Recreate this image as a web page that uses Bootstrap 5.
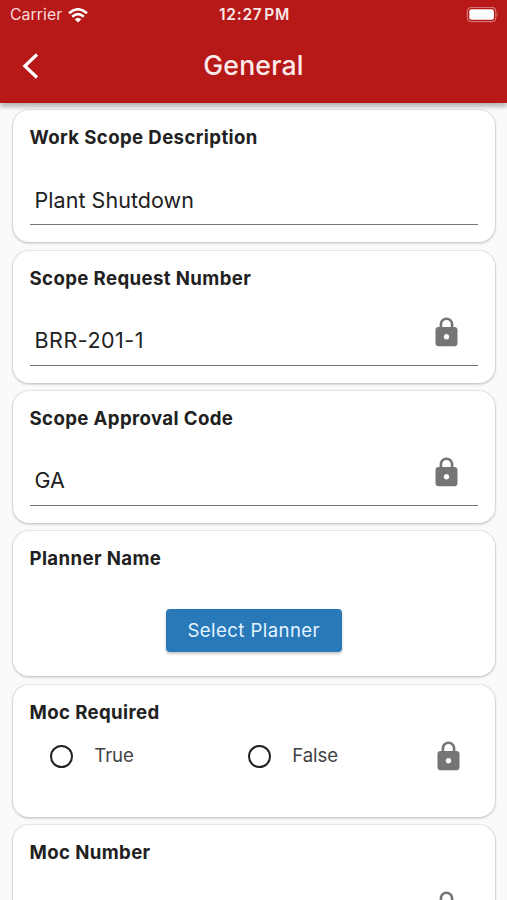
<!DOCTYPE html>
<html lang="en">
<head>
<meta charset="utf-8">
<meta name="viewport" content="width=device-width, initial-scale=1">
<title>General</title>
<link href="https://cdn.jsdelivr.net/npm/bootstrap@5.3.0/dist/css/bootstrap.min.css" rel="stylesheet">
<style>
  body { font-family: Inter, "Liberation Sans", sans-serif; background: #fafafa; color: #212121; height: 900px; }
  .app-header { background: #b71818; height: 103.4px; flex: none; box-shadow: 0 4px 4px rgba(0,0,0,.2), 0 2px 7px rgba(0,0,0,.1); z-index: 2; }
  .status-bar { height: 30px; padding: 0 8px 0 10px; color: #f8dcdc; font-size: 15.8px; line-height: 30px; }
  .carrier { letter-spacing: .08px; }
  .wifi { margin-left: 6px; }
  .clock { font-weight: 600; font-size: 15.5px; letter-spacing: .75px; word-spacing: -3px; color: #fbe6e6; }
  .title-bar { height: 73px; padding: 0 22px; }
  .screen-title { font-size: 26.6px; line-height: 70px; padding-bottom: 3px; letter-spacing: .2px; font-weight: 450; color: #fdeaea; }
  .side { flex: 1 1 0; }
  .form-list { padding: 7px 12px 0 13px; gap: 8.2px; min-height: 0; }
  .field-card { height: 132px; flex: none; border: 0; border-radius: 16px; background: #fff; padding: 14px 17px 0 16.5px;
    box-shadow: 0 0 0 1px rgba(0,0,0,.05), 0 1px 2px 1px rgba(0,0,0,.13); }
  .planner-card { height: 145.4px; }
  .field-label { font-size: 18.6px; font-weight: 650; line-height: 26px; letter-spacing: .39px; margin: 0; }
  .field-line { height: 75px; border-bottom: 1.5px solid #757575; padding: 0 15.5px 0 5px; }
  .field-value { font-size: 21.5px; line-height: 30px; letter-spacing: .05px; padding-top: 34.3px; }
  .code-value { letter-spacing: .5px; }
  .field-lock { padding-top: 25.5px; line-height: 0; }
  .btn-planner, .btn-planner:hover { background: #2979b9; color: #e4f3ff; width: 176px; height: 43px; border: 0; border-radius: 4px; padding: 0; margin-top: 38.5px;
    font-size: 18.6px; line-height: 43px; letter-spacing: .42px; box-shadow: 0 2px 3px rgba(0,0,0,.22); }
  .choice-row { height: 63px; padding: 0 13px 0 20.5px; }
  .choice { width: 198px; gap: 21.3px; font-size: 18.6px; letter-spacing: -.1px; color: #424242; }
  .choice:nth-child(2) { width: 100px; }
  .ring { width: 23px; height: 23px; border: 2.2px solid #212121; border-radius: 50%; }
</style>
</head>
<body class="overflow-hidden d-flex flex-column">
<svg class="d-none">
  <symbol id="lock" viewBox="0 0 24 24"><path fill="#757575" d="M18 8h-1V6c0-2.760-2.240-5-5-5S7 3.240 7 6v2H6c-1.100 0-2 .9-2 2v10c0 1.100.9 2 2 2h12c1.100 0 2-.9 2-2V10c0-1.100-.9-2-2-2zm-6 9c-1.100 0-2-.9-2-2s.9-2 2-2 2 .9 2 2-.9 2-2 2zm3.100-9H8.900V6c0-1.710 1.390-3.100 3.100-3.100s3.100 1.390 3.100 3.100v2z"/></symbol>
</svg>
<header class="app-header position-relative">
  <div class="status-bar d-flex align-items-center">
    <div class="side d-flex align-items-center"><span class="carrier">Carrier</span>
      <svg class="wifi" width="20" height="15" viewBox="0 0 20 15" fill="none" stroke="#fff" stroke-width="2.500"><path d="M1 5.300Q10-2.800 19 5.300M4.200 8.700Q10 3.500 15.800 8.700"/><path fill="#fff" stroke="none" d="M6.700 11.200Q10 8.200 13.300 11.200L10 14.600z"/></svg>
    </div>
    <span class="clock">12:27 PM</span>
    <div class="side d-flex justify-content-end">
      <svg width="33" height="17" viewBox="0 0 33 17"><rect x="1.300" y="0.300" width="28.600" height="14.400" rx="4" fill="none" stroke="#dc8b8b"/><rect x="3.300" y="2.300" width="24.600" height="10.400" rx="2.200" fill="#fff"/><path d="M31.200 5.300q1.500 2.200 0 4.400z" fill="#dc8b8b"/></svg>
    </div>
  </div>
  <div class="title-bar d-flex align-items-center">
    <div class="side"><svg width="18" height="27" viewBox="0 0 18 27" fill="none" stroke="#fff" stroke-width="3.200"><path d="M15 1.500L2.800 13L15 24.500"/></svg></div>
    <h1 class="screen-title mb-0">General</h1>
    <div class="side"></div>
  </div>
</header>
<main class="form-list d-flex flex-column flex-grow-1 overflow-hidden">
  <section class="card field-card">
    <h2 class="field-label">Work Scope Description</h2>
    <div class="field-line"><div class="field-value">Plant Shutdown</div></div>
  </section>
  <section class="card field-card">
    <h2 class="field-label">Scope Request Number</h2>
    <div class="field-line d-flex justify-content-between"><div class="field-value code-value">BRR-201-1</div><div class="field-lock"><svg width="33" height="33"><use href="#lock"/></svg></div></div>
  </section>
  <section class="card field-card">
    <h2 class="field-label">Scope Approval Code</h2>
    <div class="field-line d-flex justify-content-between"><div class="field-value">GA</div><div class="field-lock"><svg width="33" height="33"><use href="#lock"/></svg></div></div>
  </section>
  <section class="card field-card planner-card">
    <h2 class="field-label">Planner Name</h2>
    <button type="button" class="btn btn-planner mx-auto">Select Planner</button>
  </section>
  <section class="card field-card">
    <h2 class="field-label">Moc Required</h2>
    <div class="choice-row d-flex align-items-center">
      <div class="choice d-flex align-items-center" role="radio"><span class="ring"></span>True</div>
      <div class="choice d-flex align-items-center" role="radio"><span class="ring"></span>False</div>
      <svg class="ms-auto" width="33" height="33"><use href="#lock"/></svg>
    </div>
  </section>
  <section class="card field-card">
    <h2 class="field-label">Moc Number</h2>
    <div class="field-line d-flex justify-content-end"><div class="field-lock"><svg width="33" height="33"><use href="#lock"/></svg></div></div>
  </section>
</main>
<script src="https://cdn.jsdelivr.net/npm/bootstrap@5.3.0/dist/js/bootstrap.bundle.min.js"></script>
</body>
</html>
